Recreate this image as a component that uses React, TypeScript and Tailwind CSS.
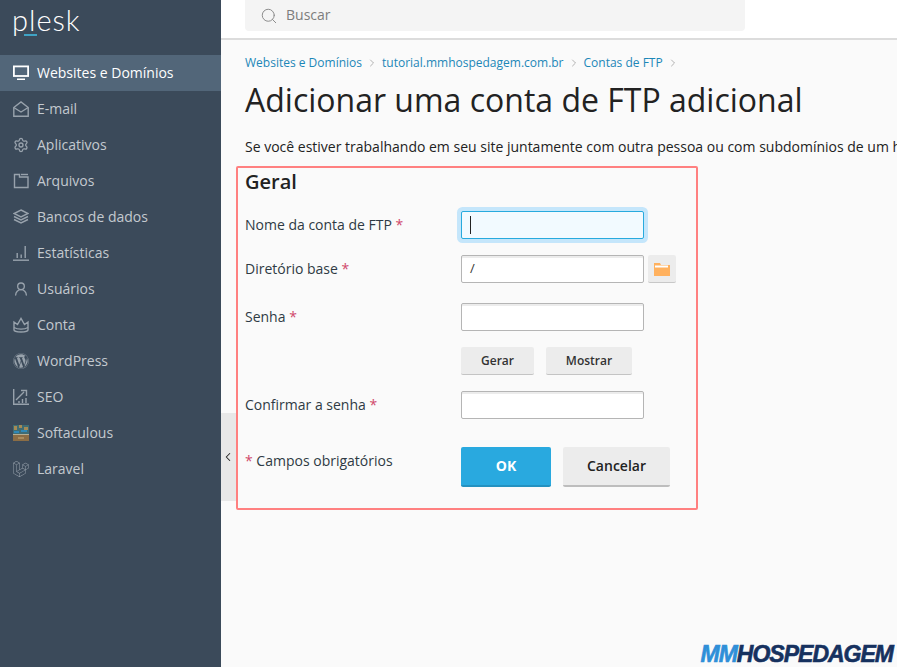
import { ChevronLeft, ChevronRight, Search, Settings, UserRound } from "lucide-react";
import { FaWordpress } from "react-icons/fa";
import { SiLaravel } from "react-icons/si";
import type { ReactNode } from "react";

const iconClass = "w-4 h-4 text-[#98a2ac]";

function MonitorIcon() {
    return (
        <svg viewBox="0 0 16 16" className="w-4 h-4 text-white" fill="none" stroke="currentColor">
            <rect x="0.9" y="1.4" width="14.2" height="9.6" strokeWidth="1.8" />
            <rect x="4" y="13.5" width="8" height="1.5" fill="currentColor" stroke="none" />
        </svg>
    );
}

function MailIcon() {
    return (
        <svg viewBox="0 0 16 16" className={iconClass} fill="none" stroke="currentColor" strokeWidth="1.4">
            <path d="M.8 6.5 8 1l7.2 5.5v8.8H.8z" />
            <path d="M.8 6.5 8 11l7.2-4.5" />
        </svg>
    );
}

function FilesIcon() {
    return (
        <svg viewBox="0 0 16 16" className={iconClass} fill="none" stroke="currentColor" strokeWidth="1.4">
            <path d="M1.5 1.5h5v2.5h8.5v10.5H1.5z" />
            <path d="M8 1.5h7" />
        </svg>
    );
}

function LayersIcon() {
    return (
        <svg viewBox="0 0 16 16" className={iconClass} fill="none" stroke="currentColor" strokeWidth="1.4">
            <path d="M8 1 15 4.5 8 8 1 4.5z" />
            <path d="M1 7.5 8 11l7-3.5" />
            <path d="M1 10.5 8 14l7-3.5" />
        </svg>
    );
}

function StatsIcon() {
    return (
        <svg viewBox="0 0 16 16" className={iconClass} fill="currentColor">
            <rect x="0" y="14.5" width="16" height="1.4" />
            <rect x="3.5" y="8" width="1.4" height="5" />
            <rect x="7.5" y="9.5" width="1.4" height="3.5" />
            <rect x="11.5" y="1" width="1.4" height="12" />
        </svg>
    );
}

function CrownIcon() {
    return (
        <svg viewBox="0 0 16 16" className={iconClass} fill="none" stroke="currentColor" strokeWidth="1.4">
            <path d="M1 5l3.5 2.5L8 1.5l3.5 6L15 5v8c0 1-3 2-7 2s-7-1-7-2z" />
            <path d="M1 10.5c2 1.2 4.5 1.6 7 1.6s5-.4 7-1.6" />
        </svg>
    );
}

function SeoIcon() {
    return (
        <svg viewBox="0 0 16 16" className={iconClass} fill="none" stroke="currentColor" strokeWidth="1.4">
            <path d="M.7 0v15.3H16" />
            <path d="M3 11l8-8M8 1.5h5.5V7" />
            <path d="M6 14v-2M9.5 14v-4M13 14V9" />
        </svg>
    );
}

function SoftaculousIcon() {
    return (
        <svg viewBox="0 0 16 16" className="w-4 h-4">
            <rect width="16" height="16" fill="#8b6d45" />
            <rect x="0" y="0" width="16" height="10" fill="#3f6c74" />
            <path d="M1 1h3v4H1zM6 0h3v3H6zM11 2h4v3h-4z" fill="#a58a55" />
            <path d="M1 6h5v2H1zM8 5h6v2H8z" fill="#2f88b8" />
            <rect x="0" y="9" width="16" height="1" fill="#b5ae94" />
            <rect x="5" y="12" width="6" height="2" fill="#a98c5e" />
        </svg>
    );
}

const navItems: { label: string; icon: ReactNode; active?: boolean }[] = [
    { label: "Websites e Domínios", icon: <MonitorIcon />, active: true },
    { label: "E-mail", icon: <MailIcon /> },
    { label: "Aplicativos", icon: <Settings className={iconClass} strokeWidth={2} /> },
    { label: "Arquivos", icon: <FilesIcon /> },
    { label: "Bancos de dados", icon: <LayersIcon /> },
    { label: "Estatísticas", icon: <StatsIcon /> },
    { label: "Usuários", icon: <UserRound className={iconClass} strokeWidth={2} /> },
    { label: "Conta", icon: <CrownIcon /> },
    { label: "WordPress", icon: <FaWordpress className={iconClass} /> },
    { label: "SEO", icon: <SeoIcon /> },
    { label: "Softaculous", icon: <SoftaculousIcon /> },
    { label: "Laravel", icon: <SiLaravel className={iconClass} /> },
];

function Sidebar() {
    return (
        <aside className="w-[221px] h-full shrink-0 bg-[#3b4a5a]">
            <div className="h-[55px] pl-3 relative">
                <span className="block text-[29px] leading-[40px] font-light tracking-[1px] text-white font-['Lato',sans-serif]">plesk</span>
                <span className="absolute left-[24px] top-[34px] w-[13px] h-[2px] bg-[#3fa3c4]" />
            </div>
            <nav>
                {navItems.map((item) => (
                    <div
                        key={item.label}
                        className={`h-9 flex items-center pl-[13px] gap-2 text-sm ${item.active ? "bg-[#526679] text-white" : "text-[#c3c9cf]"}`}
                    >
                        <span className="w-4 h-4 flex items-center justify-center">{item.icon}</span>
                        {item.label}
                    </div>
                ))}
            </nav>
        </aside>
    );
}

function Required() {
    return <span className="text-[#d0486b]">*</span>;
}

function Field({ label, value, focused, children }: { label: string; value?: string; focused?: boolean; children?: ReactNode }) {
    return (
        <div className="flex">
            <label className="w-[216px] shrink-0 pt-1 text-sm leading-5 text-[#2f3a44]">
                {label} <Required />
            </label>
            {focused ? (
                <div className="w-[183px] h-7 pl-2 flex items-center rounded-[2px] border border-[#28aade] bg-[#f2faff] ring-4 ring-[#c5e6fb]">
                    <span className="w-px h-[18px] bg-[#222]" />
                </div>
            ) : (
                <div className="w-[183px] h-7 pl-2 flex items-center rounded-[2px] border border-[#b5b5b5] bg-white shadow-[inset_0_2px_0_#ececec] text-[13px] text-[#333]">
                    {value}
                </div>
            )}
            {children}
        </div>
    );
}

function SmallButton({ label, width }: { label: string; width: string }) {
    return (
        <button className={`${width} h-7 rounded-[2px] bg-[#ececec] border-b border-[#c4c4c4] text-xs font-semibold text-[#333]`}>
            {label}
        </button>
    );
}

export default function App() {
    return (
        <div className="relative flex w-[897px] h-[667px] overflow-hidden bg-[#fafafa] font-['Open_Sans',sans-serif]">
            <Sidebar />
            <main className="flex-1 min-w-0">
                <header className="h-10 bg-white border-b-2 border-[#dcdcdc] pl-6">
                    <div className="w-[500px] h-[31px] rounded-b bg-[#f4f4f4] flex items-center pl-[15px] gap-2 text-sm leading-[29px] text-[#7d7d7d]">
                        <Search className="w-[18px] h-[18px] text-[#8a8a8a]" strokeWidth={1.3} />
                        <span className="-mt-[2px]">Buscar</span>
                    </div>
                </header>
                <div className="pl-6">
                    <div className="mt-[15px] flex items-center gap-1 text-xs leading-4 text-[#1c87b8]">
                        <span>Websites e Domínios</span>
                        <ChevronRight className="w-3 h-3 text-[#999]" strokeWidth={1.5} />
                        <span>tutorial.mmhospedagem.com.br</span>
                        <ChevronRight className="w-3 h-3 text-[#999]" strokeWidth={1.5} />
                        <span>Contas de FTP</span>
                        <ChevronRight className="w-3 h-3 text-[#999]" strokeWidth={1.5} />
                    </div>
                    <h1 className="mt-[7px] text-[32px] leading-[44px] text-[#222] whitespace-nowrap">Adicionar uma conta de FTP adicional</h1>
                    <p className="mt-[15px] text-sm leading-5 text-[#222] whitespace-nowrap">
                        Se você estiver trabalhando em seu site juntamente com outra pessoa ou com subdomínios de um host
                    </p>
                    <form className="-ml-[9px] mt-[9px] w-[462px] h-[344px] border-2 border-[#ff8080] rounded-[2px] pl-[7px]">
                        <h2 className="text-xl leading-[26px] mt-[1px] font-semibold text-[#222]">Geral</h2>
                        <div className="mt-[16px] flex flex-col">
                            <Field label="Nome da conta de FTP" focused />
                            <div className="h-4" />
                            <Field label="Diretório base" value="/">
                                <div className="ml-[4px] w-7 h-7 rounded-[2px] bg-[#ececec] border-b border-[#c8c8c8] flex items-center justify-center">
                                    <svg viewBox="0 0 16 14" className="w-4 h-[14px]">
                                        <path d="M0 1h6l1 2h9v11H0z" fill="#ffb15e" />
                                        <rect x="1" y="3.5" width="13" height="2" fill="#fff" />
                                    </svg>
                                </div>
                            </Field>
                            <div className="h-5" />
                            <Field label="Senha" />
                            <div className="mt-4 ml-[216px] flex gap-3">
                                <SmallButton label="Gerar" width="w-[73px]" />
                                <SmallButton label="Mostrar" width="w-[86px]" />
                            </div>
                            <div className="h-4" />
                            <Field label="Confirmar a senha" />
                            <div className="mt-7 flex">
                                <div className="w-[216px] shrink-0 text-sm leading-5 text-[#2f3a44] pt-1">
                                    <Required /> Campos obrigatórios
                                </div>
                                <button className="w-[90px] h-10 rounded-[2px] bg-[#29a9df] border-b-2 border-[#2391c0] text-sm font-bold text-white">OK</button>
                                <button className="ml-3 w-[107px] h-10 rounded-[2px] bg-[#ececec] border-b-2 border-[#bdbdbd] text-sm font-semibold text-[#222]">Cancelar</button>
                            </div>
                        </div>
                    </form>
                </div>
            </main>
            <div className="absolute left-[221px] top-[413px] w-[15px] h-[88px] bg-[#e8e8e8] flex items-center justify-center">
                <ChevronLeft className="w-[14px] h-[14px] -ml-[2px] text-[#222]" strokeWidth={1.8} />
            </div>
            <div className="absolute right-[4px] bottom-[-1px] text-[23px] leading-7 font-bold italic tracking-[-1px] [-webkit-text-stroke:0.6px] font-['Liberation_Sans',sans-serif] whitespace-nowrap">
                <span className="text-[#2f8fd8]">MM</span>
                <span className="text-[#16315f]">HOSPEDAGEM</span>
            </div>
        </div>
    );
}
